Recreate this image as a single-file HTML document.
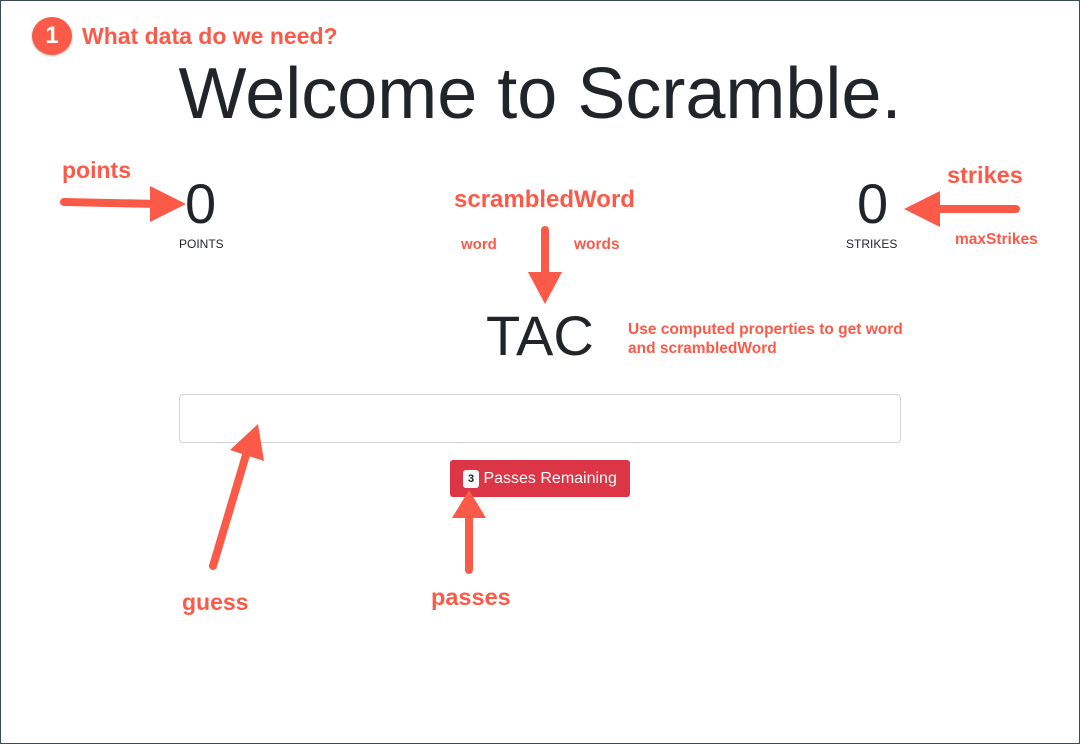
<!DOCTYPE html>
<html><head><style>
body{margin:0;width:1080px;height:744px;overflow:hidden;background:#fff;font-family:"Liberation Sans",Arial,sans-serif;position:relative;color:#212529}
.frame{position:absolute;left:0;top:0;width:1078px;height:742px;border:1px solid #3a4a55}
.a{position:absolute;color:#fc5a48;font-weight:bold;white-space:nowrap}
.t{position:absolute;white-space:nowrap}
</style></head><body>
<div class="frame"></div>
<div style="position:absolute;left:32px;top:17px;width:40px;height:38px;border-radius:50%;background:#fc5a48;color:#fff;font-weight:bold;font-size:24px;text-align:center;line-height:38px;box-shadow:0 1px 2px rgba(0,0,0,.3)">1</div>
<div class="a" style="left:82px;top:23px;font-size:23px">What data do we need?</div>
<div class="t" style="left:0;width:1080px;text-align:center;top:54px;font-size:72px;line-height:80px">Welcome to Scramble.</div>
<div class="a" style="left:62px;top:157px;font-size:23px">points</div>
<div class="t" style="left:185px;top:174px;font-size:56px;line-height:60px">0</div>
<div class="t" style="left:179px;top:237px;font-size:12px">POINTS</div>
<div class="a" style="left:454px;top:186px;font-size:24px">scrambledWord</div>
<div class="a" style="left:461px;top:236px;font-size:15px">word</div>
<div class="a" style="left:574px;top:236px;font-size:15.5px">words</div>
<div class="a" style="left:947px;top:162px;font-size:23.5px">strikes</div>
<div class="t" style="left:857px;top:174px;font-size:56px;line-height:60px">0</div>
<div class="t" style="left:846px;top:237px;font-size:12px">STRIKES</div>
<div class="a" style="left:955px;top:231px;font-size:15.5px">maxStrikes</div>
<div class="t" style="left:486px;top:305px;font-size:56px;line-height:62px">TAC</div>
<div class="a" style="left:628px;top:320px;font-size:15.5px;line-height:19px">Use computed properties to get word<br>and scrambledWord</div>
<div style="position:absolute;left:179px;top:394px;width:720px;height:47px;border:1px solid #ced4da;border-radius:4px"></div>
<div style="position:absolute;left:450px;top:460px;width:180px;height:37px;background:#dc3545;border-radius:3px;color:#fff;font-size:16px;line-height:37px">
<span style="display:inline-block;margin-left:13px;width:16px;height:18px;line-height:18px;background:#f8f9fa;color:#212529;border-radius:3px;font-size:11px;font-weight:bold;text-align:center;vertical-align:1px">3</span> Passes Remaining</div>
<div class="a" style="left:182px;top:589px;font-size:23px">guess</div>
<div class="a" style="left:431px;top:584px;font-size:23.5px">passes</div>
<svg width="1080" height="744" style="position:absolute;left:0;top:0" fill="#fc5a48" stroke="#fc5a48">
<g stroke-width="8" stroke-linecap="round">
<line x1="64" y1="202" x2="160" y2="204"/>
<line x1="545" y1="230" x2="545" y2="280"/>
<line x1="1016" y1="209" x2="930" y2="209"/>
<line x1="213" y1="566" x2="246" y2="455"/>
<line x1="469" y1="570" x2="469" y2="515"/>
</g>
<g stroke="none">
<polygon points="150,186 186,204 150,222"/>
<polygon points="528,272 562,272 545,304"/>
<polygon points="940,191 904,209 940,227"/>
<polygon points="230,450 258,424 264,461"/>
<polygon points="452,518 469,490 486,518"/>
</g>
</svg>
</body></html>
